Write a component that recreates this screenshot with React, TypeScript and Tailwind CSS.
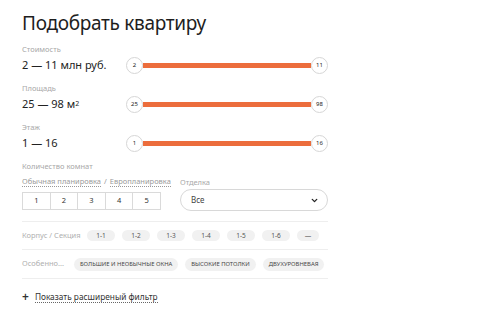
import { ChevronDown } from "lucide-react";

const ranges = [
  { label: "Стоимость", value: <>2 — 11 млн руб.</>, from: "2", to: "11" },
  { label: "Площадь", value: <>25 — 98 м<sup className="text-[7px] relative -top-[2px]">2</sup></>, from: "25", to: "98" },
  { label: "Этаж", value: <>1 — 16</>, from: "1", to: "16" },
];

const sections = ["1-1", "1-2", "1-3", "1-4", "1-5", "1-6", "—"];
const features = ["Большие и необычные окна", "Высокие потолки", "Двухуровневая"];

function Knob({ n }: { n: string }) {
  return (
    <div className="w-[17px] h-[17px] shrink-0 rounded-full border border-[#d6d6d6] bg-white flex items-center justify-center text-[6px] text-[#222]">
      {n}
    </div>
  );
}

export default function App() {
  return (
    <div className="w-[490px] h-[313px] bg-white pl-[22px] pt-[10px] font-['Noto_Sans',sans-serif] text-[#222] overflow-hidden">
      <div className="w-[306px]">
        <h1 className="text-[19px] leading-[26px] text-[#1e1e1e] tracking-[-0.3px]">Подобрать квартиру</h1>

        <div className="mt-[8px]">
          {ranges.map((r) => (
            <div key={r.label} className="mb-[10px]">
              <div className="text-[7.5px] leading-[10px] text-[#a8a8a8]">{r.label}</div>
              <div className="mt-[3px] flex items-center h-[16px]">
                <div className="w-[104px] text-[11px] leading-[16px]">{r.value}</div>
                <div className="flex-1 flex items-center">
                  <Knob n={r.from} />
                  <div className="flex-1 h-[5px] bg-[#ec6d3c]" />
                  <Knob n={r.to} />
                </div>
              </div>
            </div>
          ))}
        </div>

        <div className="text-[7.5px] leading-[10px] text-[#a8a8a8]">Количество комнат</div>
        <div className="flex mt-[5px]">
          <div className="w-[158px]">
            <div className="text-[7.5px] leading-[10px] text-[#9a9a9a] flex gap-[3px]">
              <span className="border-b border-dotted border-[#999]">Обычная планировка</span>
              <span>/</span>
              <span className="border-b border-dotted border-[#999]">Европланировка</span>
            </div>
            <div className="mt-[5px] flex w-[139px] h-[18px] border border-[#dadada]">
              {["1", "2", "3", "4", "5"].map((n, i) => (
                <div
                  key={n}
                  className={`flex-1 flex items-center justify-center text-[7.5px] text-[#333] ${i > 0 ? "border-l border-[#dadada]" : ""}`}
                >
                  {n}
                </div>
              ))}
            </div>
          </div>
          <div className="flex-1">
            <div className="text-[7.5px] leading-[10px] text-[#a8a8a8] mt-[1px]">Отделка</div>
            <div className="mt-[2px] h-[22px] rounded-full border border-[#d8d8d8] flex items-center justify-between pl-[10px] pr-[8px]">
              <span className="text-[8px] text-[#444]">Все</span>
              <ChevronDown size={9} strokeWidth={3.5} className="text-[#222]" />
            </div>
          </div>
        </div>

        <div className="mt-[10px] border-t border-[#eeeeee]">
          <div className="h-[28px] flex items-center border-b border-[#eeeeee]">
            <span className="text-[7.5px] text-[#b0b0b0] w-[65px] shrink-0">Корпус / Секция</span>
            <div className="flex gap-[7px]">
              {sections.map((s) => (
                <span
                  key={s}
                  className={`h-[11px] rounded-full bg-[#f1f1f1] text-[6.5px] text-[#555] flex items-center justify-center ${s === "—" ? "w-[22px]" : "w-[28px]"}`}
                >
                  {s}
                </span>
              ))}
            </div>
          </div>
          <div className="h-[29px] flex items-center border-b border-[#eeeeee]">
            <span className="text-[7.5px] text-[#b0b0b0] w-[52px] shrink-0">Особенно...</span>
            <div className="flex gap-[7px] whitespace-nowrap">
              {features.map((f) => (
                <span
                  key={f}
                  className="h-[13px] shrink-0 rounded-full bg-[#f1f1f1] px-[6px] text-[5.9px] uppercase text-[#444] flex items-center"
                >
                  {f}
                </span>
              ))}
            </div>
          </div>
        </div>

        <div className="mt-[12px] flex items-center gap-[6px] text-[8.3px] text-[#333]">
          <span className="text-[12px] leading-[10px] font-semibold">+</span>
          <span className="border-b border-dotted border-[#666] leading-[11px]">Показать расширеный фильтр</span>
        </div>
      </div>
    </div>
  );
}
